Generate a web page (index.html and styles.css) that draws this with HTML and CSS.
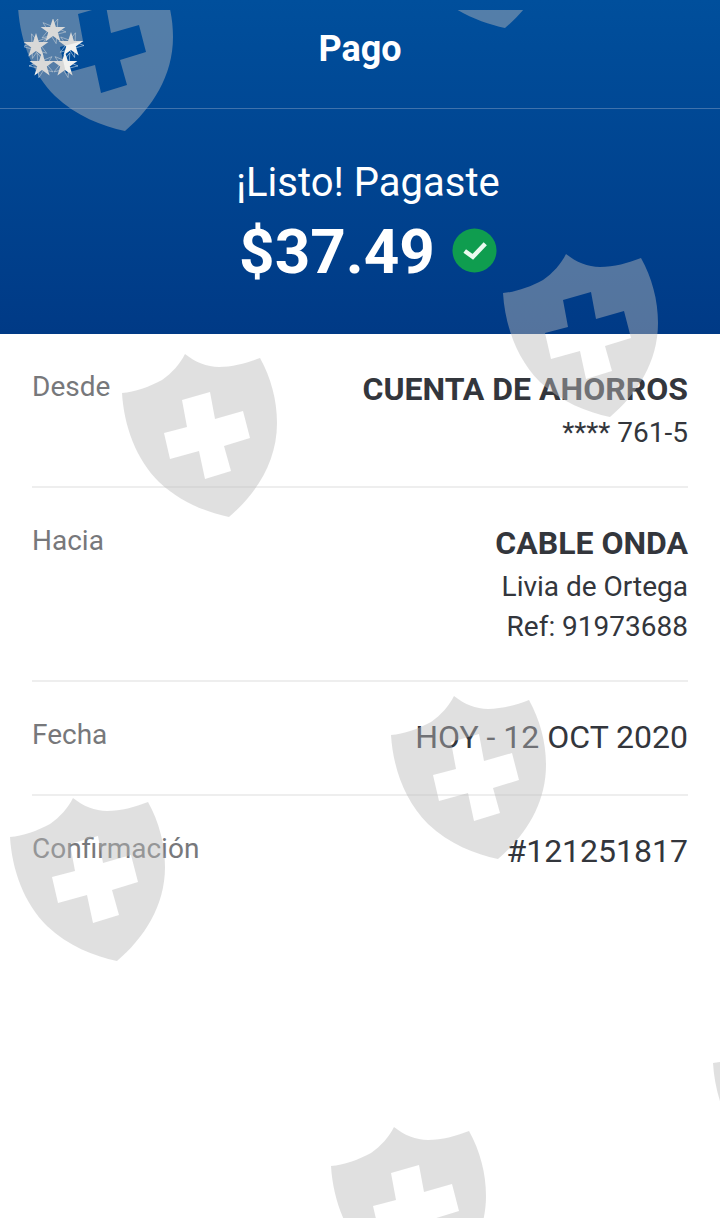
FILE: index.html
```html
<!DOCTYPE html>
<html lang="es">
<head>
    <meta charset="UTF-8">
    <meta name="viewport" content="width=device-width, initial-scale=1.0">
    <title>Pago</title>
    <link rel="stylesheet" href="styles.css">
</head>
<body>
    <div class="page">
        <header class="hero">
            <div class="topbar">
                <svg class="logo" viewBox="0 0 60 60" aria-hidden="true">
                    <defs>
                        <polygon id="star" points="0,-13 2.9,-4 12.4,-4 4.8,1.5 7.6,10.5 0,5 -7.6,10.5 -4.8,1.5 -12.4,-4 -2.9,-4"/>
                    </defs>
                    <g class="star-ghost">
                        <use href="#star" transform="translate(29 12) rotate(22)"/>
                        <use href="#star" transform="translate(12 27) rotate(-20)"/>
                        <use href="#star" transform="translate(47 26) rotate(20)"/>
                        <use href="#star" transform="translate(18 46) rotate(-22)"/>
                        <use href="#star" transform="translate(41 46) rotate(22)"/>
                    </g>
                    <g class="star">
                        <use href="#star" transform="translate(29 12)"/>
                        <use href="#star" transform="translate(12 27)"/>
                        <use href="#star" transform="translate(47 26)"/>
                        <use href="#star" transform="translate(18 46)"/>
                        <use href="#star" transform="translate(41 46)"/>
                    </g>
                </svg>
                <h1>Pago</h1>
            </div>
            <div class="summary">
                <p class="summary-label">¡Listo! Pagaste</p>
                <div class="summary-amount">
                    <span>$37.49</span>
                    <svg class="check" viewBox="0 0 46 46" aria-hidden="true">
                        <circle cx="23" cy="23" r="22.5" fill="#0f9d4f"/>
                        <path d="M13 23.5l8.3 6 12.7-13.4" fill="none" stroke="#eafbf0" stroke-width="4.5"/>
                    </svg>
                </div>
            </div>
        </header>

        <main class="details">
            <div class="row">
                <span class="row-label">Desde</span>
                <div class="row-value">
                    <strong>CUENTA DE AHORROS</strong>
                    <span>**** 761-5</span>
                </div>
            </div>
            <div class="row">
                <span class="row-label">Hacia</span>
                <div class="row-value">
                    <strong>CABLE ONDA</strong>
                    <span>Livia de Ortega</span>
                    <span>Ref: 91973688</span>
                </div>
            </div>
            <div class="row">
                <span class="row-label">Fecha</span>
                <div class="row-value">
                    <span class="row-big">HOY - 12 OCT 2020</span>
                </div>
            </div>
            <div class="row">
                <span class="row-label">Confirmación</span>
                <div class="row-value">
                    <span class="row-big">#121251817</span>
                </div>
            </div>
        </main>

        <!-- marca de agua encima de todo -->
        <svg class="watermark" viewBox="0 10 720 1208" aria-hidden="true">
            <defs>
                <path id="shield" fill-rule="evenodd" d="M63 0C73 8 85 13 97 13C111 13 125 9 138 4C149 24 155 46 155 69C155 108 134 140 107 163C84 158 58 148 37 128C14 105 2 72 0 39C13 38 27 33 40 26C50 19 58 10 63 0ZM60 46L65 73L42 79L48 105L77 97L83 125L109 117L102 92L128 84L121 57L93 65L88 38Z"/>
            </defs>
            <use href="#shield" x="18" y="-32"/>
            <use href="#shield" x="398" y="-135"/>
            <use href="#shield" x="503" y="254"/>
            <use href="#shield" x="122" y="354"/>
            <use href="#shield" x="391" y="696"/>
            <use href="#shield" x="10" y="798"/>
            <use href="#shield" x="713" y="1024"/>
            <use href="#shield" x="331" y="1127"/>
        </svg>
    </div>
</body>
</html>
```

FILE: styles.css
```css
body {
    margin: 0;
    font-family: Roboto, 'Liberation Sans', sans-serif;
    background-color: #fff;
}
.page {
    position: relative;
    width: 720px;
    height: 1218px;
    overflow: hidden;
}

/* cabecera azul */
.hero {
    height: 334px;
    background: linear-gradient(#004f9c, #003a86);
    color: #fff;
}
.topbar {
    position: relative;
    box-sizing: border-box;
    height: 109px;
    padding-bottom: 10px;
    display: flex;
    align-items: center;
    justify-content: center;
    border-bottom: 1px solid #3f72ac;
}
.topbar h1 {
    margin: 0;
    font-size: 36px;
    font-weight: 700;
}
.logo {
    position: absolute;
    left: 24px;
    top: 19px;
    width: 60px;
    height: 60px;
}
.star {
    fill: #f2f2f0;
}
.star-ghost {
    fill: none;
    stroke: rgba(255, 255, 255, 0.55);
    stroke-width: 0.8;
}
.summary {
    display: flex;
    flex-direction: column;
    align-items: center;
    padding-top: 50px;
    padding-left: 16px;
}
.summary-label {
    margin: 0;
    font-size: 40px;
    line-height: 48px;
}
.summary-amount {
    display: flex;
    align-items: center;
    gap: 17px;
    margin-top: 9px;
    font-size: 62px;
    font-weight: 700;
    line-height: 72px;
}
.check {
    width: 45px;
    height: 45px;
    margin-top: -4px;
}

/* filas */
.details {
    padding: 0 32px;
}
.row {
    display: flex;
    justify-content: space-between;
    padding: 32px 0 33px;
    border-bottom: 2px solid #eeeeee;
}
.row:last-child {
    border-bottom: none;
}
.row-label {
    font-size: 28px;
    line-height: 42px;
    color: #77787b;
}
.row-value {
    display: flex;
    flex-direction: column;
    align-items: flex-end;
    font-size: 28px;
    line-height: 40px;
    color: #33363c;
}
.row-value strong,
.row-big {
    margin-bottom: 1px;
    font-size: 32px;
    line-height: 46px;
}
.row-value strong {
    font-weight: 700;
}

.watermark {
    position: absolute;
    left: 0;
    top: 10px;
    width: 720px;
    height: 1208px;
    fill: rgba(186, 186, 186, 0.45);
    pointer-events: none;
}
```
